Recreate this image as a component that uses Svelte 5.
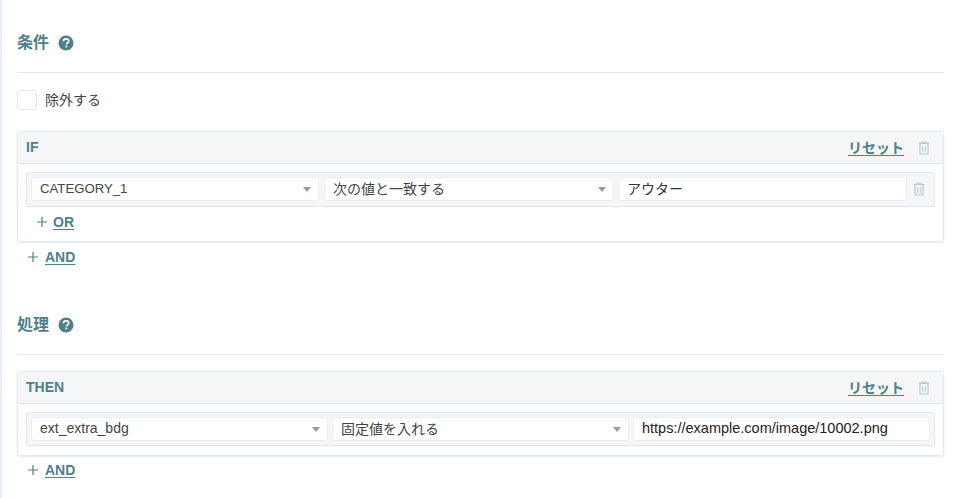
<script>
  const plusSize = 10;
</script>

{#snippet help()}
  <svg class="help" viewBox="0 0 16 16" width="16" height="16" aria-hidden="true">
    <circle cx="8" cy="8" r="7.5" fill="#4f7f8b" />
    <path d="M5.4 6.3c.1-1.6 1.2-2.5 2.7-2.5s2.6.9 2.6 2.1c0 1-.5 1.5-1.3 2-.7.5-.9.8-.9 1.5" fill="none" stroke="#fff" stroke-width="1.7" />
    <rect x="7.4" y="10.6" width="1.8" height="1.8" fill="#fff" />
  </svg>
{/snippet}

{#snippet trash()}
  <svg class="trash" viewBox="0 0 12 14" width="12" height="14" aria-hidden="true">
    <path d="M0.5 2.5h11M4 2.5V1h4v1.5M2 2.5v10.5h8V2.5" fill="none" stroke="#b3c8cd" stroke-width="1.2" />
    <path d="M4.7 5v6M7.3 5v6" fill="none" stroke="#b3c8cd" stroke-width="1" />
  </svg>
{/snippet}

{#snippet add(label)}
  <svg class="plus" viewBox="0 0 10 10" width={plusSize} height={plusSize} aria-hidden="true">
    <path d="M5 0v10M0 5h10" stroke="#4f7f8b" stroke-width="1.2" fill="none" />
  </svg>
  <a href="#top" class="link">{label}</a>
{/snippet}

{#snippet head(label)}
  <div class="card-head">
    <span class="card-title">{label}</span>
    <a href="#top" class="link reset">リセット</a>
    {@render trash()}
  </div>
{/snippet}

{#snippet select(value, cls)}
  <div class="field select {cls}"><span>{value}</span><i class="caret"></i></div>
{/snippet}

<main>
  <section class="first">
    <h2>条件 {@render help()}</h2>
    <label class="check"><span class="box"></span><span class="check-label">除外する</span></label>

    <div class="card">
      {@render head('IF')}
      <div class="card-body">
        <div class="row if-row">
          {@render select('CATEGORY_1', 'a')}
          {@render select('次の値と一致する', 'b')}
          <div class="field text c">アウター</div>
          <span class="row-trash">{@render trash()}</span>
        </div>
        <div class="or">{@render add('OR')}</div>
      </div>
    </div>
    <div class="and">{@render add('AND')}</div>
  </section>

  <section class="second">
    <h2>処理 {@render help()}</h2>
    <div class="card">
      {@render head('THEN')}
      <div class="card-body then-body">
        <div class="row then-row">
          {@render select('ext_extra_bdg', 'd')}
          {@render select('固定値を入れる', 'd')}
          <div class="field text d url">https://example.com/image/10002.png</div>
        </div>
      </div>
    </div>
    <div class="and and-last">{@render add('AND')}</div>
  </section>
</main>

<style>
  :global(body) {
    margin: 0;
    background: #fff;
  }
  main {
    box-sizing: border-box;
    width: 960px;
    height: 498px;
    overflow: hidden;
    padding: 0 16px 0 15px;
    border-left: 2px solid #e6eef1;
    font-family: "Liberation Sans", "Noto Sans CJK JP", sans-serif;
    font-size: 14px;
    color: #444;
  }
  .first {
    padding-top: 31px;
  }
  .second {
    padding-top: 41px;
  }
  h2 {
    display: flex;
    align-items: center;
    gap: 9px;
    margin: 0;
    height: 24px;
    padding-bottom: 17px;
    border-bottom: 1px solid #e3eaec;
    font-size: 16px;
    line-height: 24px;
    font-weight: 700;
    color: #4f7f8b;
    box-sizing: content-box;
  }
  .help {
    flex: none;
  }
  .second h2 {
    margin-bottom: 16px;
  }
  .check {
    display: flex;
    align-items: center;
    gap: 8px;
    height: 20px;
    margin: 17px 0 21px;
  }
  .check-label {
    padding-bottom: 2px;
  }
  .box {
    box-sizing: border-box;
    width: 20px;
    height: 20px;
    border: 1px solid #e3eaec;
    border-radius: 3px;
    background: #fff;
  }
  .card {
    border: 1px solid #e3eaec;
    border-radius: 3px;
    background: #fff;
    box-shadow: 0 1px 2px rgba(60, 90, 100, 0.14);
  }
  .card-head {
    display: flex;
    align-items: center;
    box-sizing: border-box;
    height: 32px;
    padding: 0 13px 0 8px;
    border-bottom: 1px solid #dfe7ea;
    background: #f4f6f8;
  }
  .card-title {
    flex: 1;
    padding-bottom: 1px;
    font-weight: 700;
    color: #4f7f8b;
  }
  .link {
    font-weight: 700;
    font-size: 14px;
    color: #4f7f8b;
    text-decoration: underline;
    text-underline-offset: 2px;
  }
  .reset {
    margin-right: 14px;
    padding-bottom: 2px;
  }
  .card-body {
    padding: 8px 8px 0;
  }
  .then-body {
    padding-bottom: 9px;
  }
  .row {
    box-sizing: border-box;
    padding: 4px;
    border: 1px solid #dfe7ea;
    border-radius: 3px;
    background: #f4f6f8;
  }
  .if-row {
    display: flex;
    align-items: flex-start;
    height: 35px;
  }
  .then-row {
    display: grid;
    grid-template-columns: repeat(3, 297px);
    gap: 4px;
    height: 34px;
  }
  .field {
    display: flex;
    align-items: center;
    box-sizing: border-box;
    height: 24px;
    padding: 0 8px 2px;
    border: 1px solid #e9eff1;
    border-radius: 3px;
    background: #fff;
    white-space: nowrap;
    min-width: 0;
  }
  .select {
    justify-content: space-between;
    padding-right: 7px;
  }
  .a {
    width: 288px;
    font-size: 13.2px;
  }
  .b {
    width: 290px;
    margin-left: 5px;
  }
  .c {
    width: 289px;
    margin-left: 4px;
    color: #333;
  }
  .url {
    color: #222;
    font-size: 14.5px;
  }
  .caret {
    width: 0;
    height: 0;
    margin-top: 2px;
    border-left: 4px solid transparent;
    border-right: 4px solid transparent;
    border-top: 5px solid #999;
  }
  .row-trash {
    display: flex;
    margin: 5px 0 0 6px;
  }
  .plus {
    flex: none;
    margin-right: 7px;
  }
  .or {
    display: flex;
    align-items: center;
    height: 30px;
    padding: 0 0 4px 11px;
  }
  .or .plus {
    margin-right: 6px;
  }
  .and {
    display: flex;
    align-items: center;
    height: 30px;
    padding-left: 11px;
  }
  .and-last {
    height: 28px;
  }
</style>
